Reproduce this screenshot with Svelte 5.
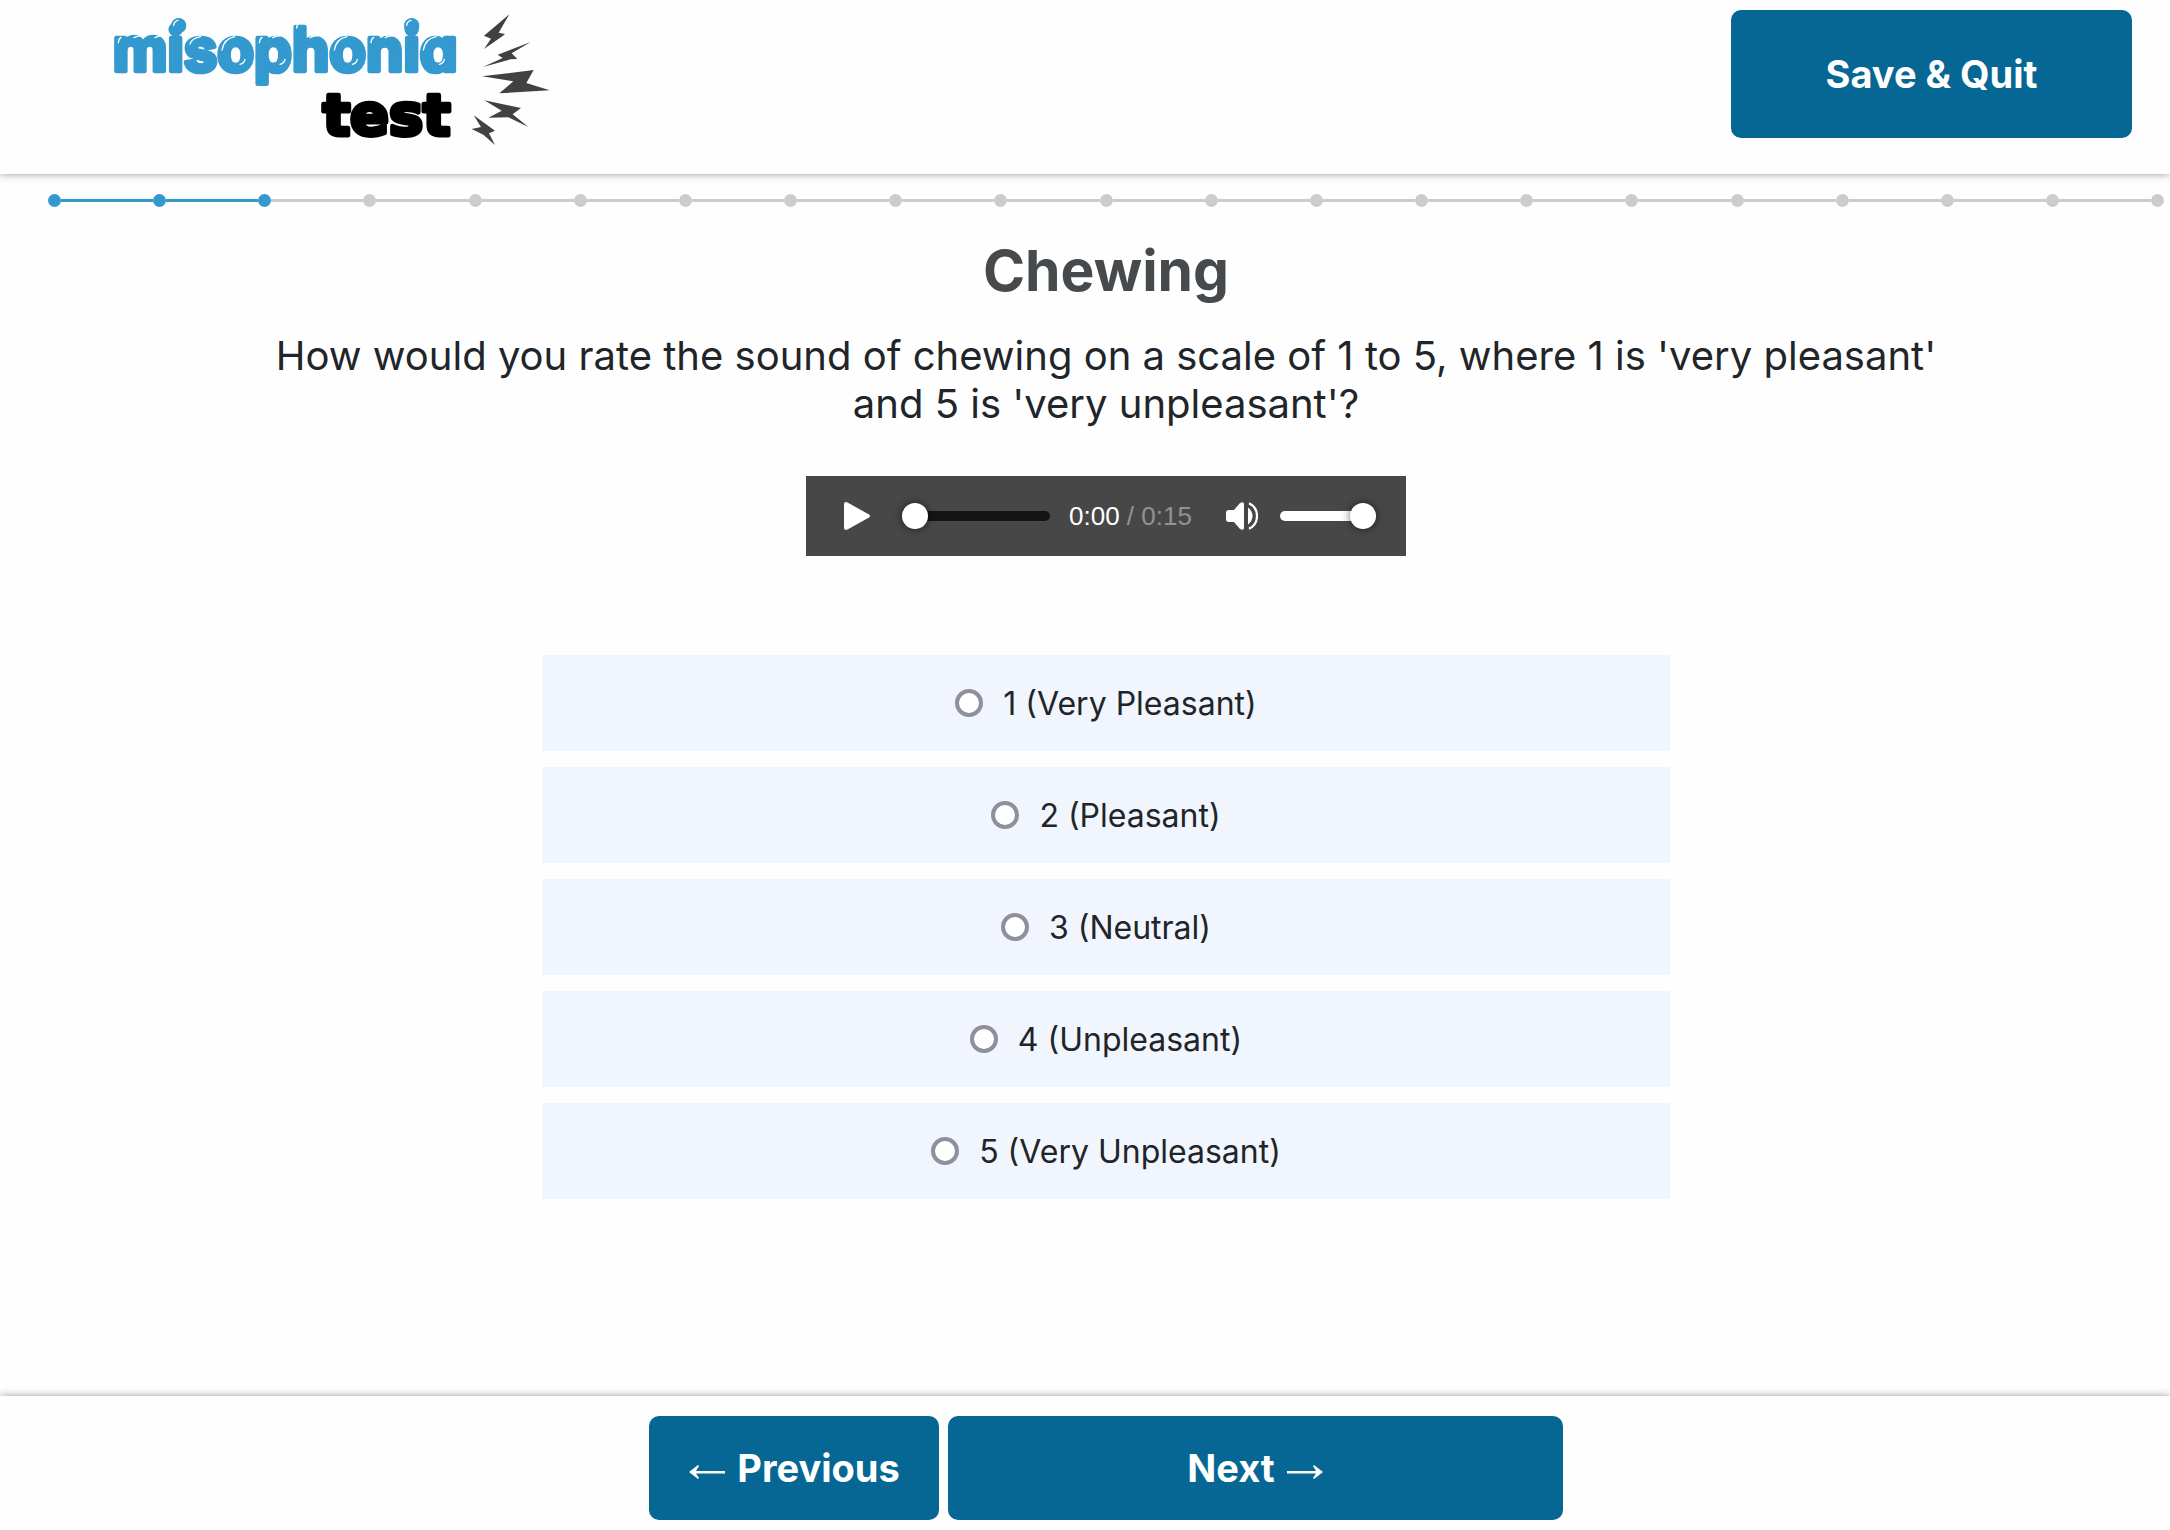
<script lang="ts">
  const steps = Array.from({ length: 21 }, (_, i) => i);
  const currentStep = 2;

  const options = [
    { value: 1, label: "1 (Very Pleasant)" },
    { value: 2, label: "2 (Pleasant)" },
    { value: 3, label: "3 (Neutral)" },
    { value: 4, label: "4 (Unpleasant)" },
    { value: 5, label: "5 (Very Unpleasant)" },
  ];

  let answer = $state<number | null>(null);
  let position = $state(0);
  let volume = $state(100);
</script>

<div class="page">
  <header class="topbar">
    <a class="logo" href="#home" aria-label="misophonia test">
      <svg viewBox="0 0 1380 480" aria-hidden="true">
        <text class="word-top" x="38" y="214">misophonia</text>
        <g fill="#3399ce">
          <circle cx="236" cy="77" r="23" />
          <circle cx="935" cy="77" r="23" />
        </g>
        <g class="shine">
          <path d="M221 76q1-12 13-15M920 76q1-12 13-15" />
          <path d="M55 128q1-12 8-16M102 113q10-6 22-5M165 113q10-6 22-5" />
          <path d="M270 132q6-18 32-22" />
          <path d="M366 150q6-34 38-40M420 193q13-4 15-15" />
          <path d="M478 128q1-12 8-16M518 113q10-6 22-5M540 193q13-4 15-15" />
          <path d="M590 84q1-12 8-16M630 113q10-6 22-5" />
          <path d="M703 150q6-34 38-40M757 193q13-4 15-15" />
          <path d="M813 128q1-12 8-16M856 113q10-6 22-5" />
          <path d="M970 150q6-34 38-40M1018 193q13-4 15-15" />
        </g>
        <text class="word-bottom" x="668" y="404">test</text>
        <g fill="#414042">
          <path d="M1228 43L1152 107L1173 116L1152 147L1208 108L1215 102L1196 98Z" />
          <path d="M1292 126L1193 164L1208 174L1149 201L1231 178L1252 177L1235 160Z" />
          <path d="M1146 229L1240 244L1198 280L1349 271L1279 249L1301 210Z" />
          <path d="M1153 301L1205 332L1165 353L1225 352L1285 381L1238 343L1263 324Z" />
          <path d="M1121 346L1143 381L1115 387L1150 404L1185 435L1167 400L1185 392Z" />
        </g>
      </svg>
    </a>
    <button class="btn save" type="button">Save &amp; Quit</button>
  </header>

  <main>
    <ol class="progress" aria-label="Progress">
      {#each steps as step}
        <li class:done={step <= currentStep} class:passed={step < currentStep}></li>
      {/each}
    </ol>

    <h1>Chewing</h1>
    <p class="question">
      How would you rate the sound of chewing on a scale of 1 to 5, where 1 is 'very pleasant' and 5 is 'very unpleasant'?
    </p>

    <div class="player">
      <button class="icon-btn" type="button" aria-label="Play">
        <svg class="play" viewBox="0 0 26 28"><path d="M0 2.5Q0-1 3.5.5L25 12.5Q27 14 25 15.5L3.5 27.5Q0 29 0 25.5Z" /></svg>
      </button>
      <input class="seek" type="range" min="0" max="15" bind:value={position} aria-label="Position" />
      <span class="time">0:00 <span class="total">/ 0:15</span></span>
      <button class="icon-btn" type="button" aria-label="Mute">
        <svg class="speaker" viewBox="0 0 32 28">
          <path d="M0 11Q0 8 3 8H8L14 1Q18-1 18 2V26Q18 29 14 27L8 20H3Q0 20 0 17Z" />
          <path d="M22 5.5Q26.5 9 26.5 14T22 22.5Z" />
          <path d="M23 1.2Q31 5 31 14T23 26.8" fill="none" stroke="#fff" stroke-width="2.2" />
        </svg>
      </button>
      <input class="volume" type="range" min="0" max="100" bind:value={volume} aria-label="Volume" />
    </div>

    <div class="options" role="radiogroup" aria-label="Rating">
      {#each options as option}
        <label class="option">
          <input type="radio" name="rating" value={option.value} bind:group={answer} />
          <span>{option.label}</span>
        </label>
      {/each}
    </div>
  </main>

  <footer class="bottombar">
    <button class="btn previous" type="button">
      <svg class="arrow" viewBox="0 0 37 16" aria-hidden="true">
        <path d="M1 8L10 1L11 2L8 7H37V9.5H8L11 14L10 15Z" />
      </svg>
      Previous
    </button>
    <button class="btn next" type="button">
      Next
      <svg class="arrow" viewBox="0 0 37 16" aria-hidden="true">
        <path d="M36 8L27 1L26 2L29 7H0V9.5H29L26 14L27 15Z" />
      </svg>
    </button>
  </footer>
</div>

<style>
  :global(body) {
    margin: 0;
    background: #fefefe;
  }

  .page {
    display: flex;
    flex-direction: column;
    min-height: 100vh;
    font-family: Inter, "Liberation Sans", sans-serif;
    color: #212529;
  }

  .topbar {
    display: flex;
    align-items: flex-start;
    justify-content: space-between;
    box-sizing: border-box;
    min-height: 174px;
    padding: 0 38px 0 100px;
    background: #fefefe;
    box-shadow: 0 0 8px rgba(0, 0, 0, 0.4);
  }

  .logo svg {
    display: block;
    width: 460px;
    height: 160px;
  }

  .word-top {
    font-family: Inter, sans-serif;
    font-size: 180px;
    font-weight: 700;
    font-feature-settings: "cv11";
    fill: #3399ce;
    stroke: #3399ce;
    stroke-width: 14px;
    stroke-linejoin: round;
  }

  .word-bottom {
    font-family: "DejaVu Sans", sans-serif;
    font-size: 172px;
    font-weight: 700;
    fill: #000;
    stroke: #000;
    stroke-width: 14px;
    stroke-linejoin: round;
  }

  .shine {
    fill: none;
    stroke: #fff;
    stroke-width: 4px;
    stroke-linecap: round;
  }

  .btn {
    display: flex;
    align-items: center;
    justify-content: center;
    gap: 12px;
    padding: 0;
    border: 0;
    border-radius: 10px;
    background: #066794;
    color: #fff;
    font-family: inherit;
    font-size: 38px;
    font-weight: 700;
    line-height: 48px;
    cursor: pointer;
  }

  .btn:hover {
    background: #05587e;
  }

  .save {
    width: 401px;
    height: 128px;
    margin-top: 10px;
  }

  main {
    flex: 1;
    display: flex;
    flex-direction: column;
    align-items: center;
    padding-left: 42px;
  }

  .progress {
    display: flex;
    justify-content: space-between;
    align-self: stretch;
    margin: 20px 6px 0;
    padding: 0;
    list-style: none;
  }

  .progress li {
    flex: 1;
    display: flex;
    align-items: center;
    height: 13px;
  }

  .progress li:last-child {
    flex: none;
  }

  .progress li::before {
    content: "";
    width: 13px;
    height: 13px;
    border-radius: 50%;
    background: #ccc;
  }

  .progress li:not(:last-child)::after {
    content: "";
    flex: 1;
    height: 3px;
    background: #ccc;
  }

  .progress li.done::before,
  .progress li.passed::after {
    background: #3399ce;
  }

  h1 {
    margin: 28px 0 0;
    color: #464a4d;
    font-size: 57px;
    font-weight: 700;
    line-height: 72px;
  }

  .question {
    width: 80%;
    margin: 25px 0 0;
    font-size: 40px;
    line-height: 48px;
    text-align: center;
  }

  .player {
    display: flex;
    align-items: center;
    box-sizing: border-box;
    width: 600px;
    height: 80px;
    margin-top: 48px;
    padding: 0 30px 0 38px;
    background: #474747;
  }

  .icon-btn {
    display: flex;
    padding: 0;
    border: 0;
    background: none;
    cursor: pointer;
  }

  .icon-btn svg {
    fill: #fff;
  }

  .play {
    width: 26px;
    height: 28px;
  }

  .speaker {
    width: 32px;
    height: 28px;
  }

  .seek,
  .volume {
    appearance: none;
    height: 10px;
    margin: 0;
    border-radius: 5px;
    background: #141414;
  }

  .seek {
    width: 148px;
    margin: 0 19px 0 32px;
  }

  .volume {
    width: 96px;
    margin-left: 22px;
    background: #fff;
  }

  .seek::-webkit-slider-thumb,
  .volume::-webkit-slider-thumb {
    appearance: none;
    width: 26px;
    height: 26px;
    border-radius: 50%;
    background: #fff;
    box-shadow: 0 0 8px rgba(0, 0, 0, 0.6);
  }

  .time {
    flex: 1;
    color: #fff;
    font-family: "Liberation Sans", sans-serif;
    font-size: 26px;
    white-space: nowrap;
  }

  .total {
    color: #929292;
  }

  .options {
    display: flex;
    flex-direction: column;
    gap: 16px;
    width: 53%;
    margin: 99px 0 40px;
  }

  .option {
    display: flex;
    align-items: center;
    justify-content: center;
    gap: 20px;
    height: 96px;
    background: #f1f5fd;
    font-size: 32px;
    cursor: pointer;
  }

  .option input {
    appearance: none;
    box-sizing: border-box;
    width: 28px;
    height: 28px;
    margin: 0;
    border: 4px solid #8f8f9d;
    border-radius: 50%;
    background: #fff;
  }

  .option input:checked {
    border-color: #066794;
    background: radial-gradient(#066794 45%, #fff 50%);
  }

  .bottombar {
    display: flex;
    justify-content: center;
    gap: 9px;
    padding: 20px 0 10px 42px;
    background: #fefefe;
    box-shadow: 0 0 8px rgba(0, 0, 0, 0.4);
  }

  .bottombar .btn {
    height: 104px;
  }

  .previous {
    width: 290px;
  }

  .next {
    width: 615px;
  }

  .arrow {
    width: 37px;
    height: 16px;
    padding-top: 8px;
    fill: #fff;
  }
</style>
